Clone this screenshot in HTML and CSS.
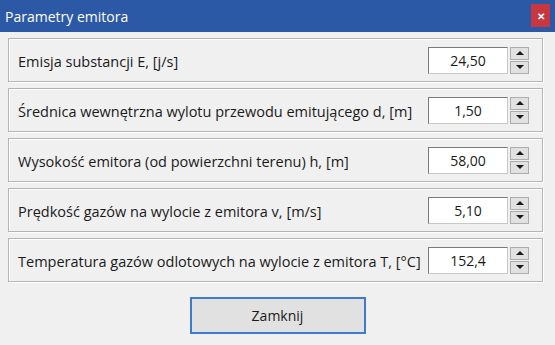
FILE: index.html
```html
<!DOCTYPE html>
<html lang="pl">
<head>
    <meta charset="UTF-8">
    <title>Parametry emitora</title>
    <link rel="stylesheet" href="styles.css">
</head>
<body>
    <div class="titlebar">
        <span class="title">Parametry emitora</span>
        <span class="close">&#x2715;</span>
    </div>
    <div class="content">
        <div class="row">
            <span class="lbl">Emisja substancji E, [j/s]</span>
            <div class="spin">
                <input class="ipt" type="text" value="24,50">
                <div class="arrows"><span class="up"></span><span class="down"></span></div>
            </div>
        </div>
        <div class="row">
            <span class="lbl">Średnica wewnętrzna wylotu przewodu emitującego d, [m]</span>
            <div class="spin">
                <input class="ipt" type="text" value="1,50">
                <div class="arrows"><span class="up"></span><span class="down"></span></div>
            </div>
        </div>
        <div class="row">
            <span class="lbl">Wysokość emitora (od powierzchni terenu) h, [m]</span>
            <div class="spin">
                <input class="ipt" type="text" value="58,00">
                <div class="arrows"><span class="up"></span><span class="down"></span></div>
            </div>
        </div>
        <div class="row">
            <span class="lbl">Prędkość gazów na wylocie z emitora v, [m/s]</span>
            <div class="spin">
                <input class="ipt" type="text" value="5,10">
                <div class="arrows"><span class="up"></span><span class="down"></span></div>
            </div>
        </div>
        <div class="row">
            <span class="lbl">Temperatura gazów odlotowych na wylocie z emitora T, [°C]</span>
            <div class="spin">
                <input class="ipt" type="text" value="152,4">
                <div class="arrows"><span class="up"></span><span class="down"></span></div>
            </div>
        </div>
        <div class="buttonContainer">
            <button class="btn1">Zamknij</button>
        </div>
    </div>
</body>
</html>
```

FILE: styles.css
```css
body {
    margin: 0;
    background-color: #f0f0f0;
    font-family: "Open Sans", "Noto Sans", sans-serif;
    font-size: 14px;
    color: #1a1a1a;
    width: 555px;
    height: 345px;
    overflow: hidden;
}
.titlebar {
    height: 32px;
    background-color: #2c59a6;
    display: flex;
    align-items: center;
    justify-content: space-between;
    padding-left: 5px;
    padding-right: 5px;
}
.title {
    color: #ffffff;
    font-size: 14px;
}
.close {
    width: 19px;
    height: 23px;
    background-color: #c7373f;
    color: #ffffff;
    font-size: 10px;
    font-weight: bold;
    display: flex;
    align-items: center;
    justify-content: center;
    margin-top: -1px;
}
.content {
    padding: 6px 12px 0 8px;
    display: flex;
    flex-direction: column;
    gap: 6px;
}
.row {
    height: 42px;
    border: 1px solid #b4b4b4;
    box-shadow: inset 1px 1px 0 #ffffff, 1px 1px 0 #ffffff;
    display: flex;
    align-items: center;
    justify-content: space-between;
    padding: 0 13px 0 9px;
}
.lbl {
    margin-top: 2px;
    font-size: 14.5px;
}
.spin {
    display: flex;
    gap: 2px;
}
.ipt {
    box-sizing: border-box;
    width: 80px;
    height: 27px;
    border: 1px solid #7a7a7a;
    border-right-color: #c8c8c8;
    border-bottom-color: #c8c8c8;
    background-color: #ffffff;
    text-align: center;
    font-family: "Open Sans", "Noto Sans", sans-serif;
    font-size: 14px;
    color: #1a1a1a;
    padding: 0;
}
.arrows {
    display: flex;
    flex-direction: column;
    gap: 1px;
}
.up, .down {
    box-sizing: border-box;
    width: 19px;
    height: 13px;
    background-color: #e1e1e1;
    border: 1px solid #adadad;
    display: flex;
    align-items: center;
    justify-content: center;
}
.up::after {
    content: "";
    border-left: 4px solid transparent;
    border-right: 4px solid transparent;
    border-bottom: 4px solid #1a1a1a;
}
.down::after {
    content: "";
    border-left: 4px solid transparent;
    border-right: 4px solid transparent;
    border-top: 4px solid #1a1a1a;
}
.buttonContainer {
    display: flex;
    justify-content: center;
    padding-top: 9px;
    padding-left: 4px;
}
.btn1 {
    width: 176px;
    height: 37px;
    border: 2px solid #3e7bd0;
    background-color: #e1e1e1;
    font-family: "Open Sans", "Noto Sans", sans-serif;
    font-size: 14px;
    color: #1a1a1a;
}
```
